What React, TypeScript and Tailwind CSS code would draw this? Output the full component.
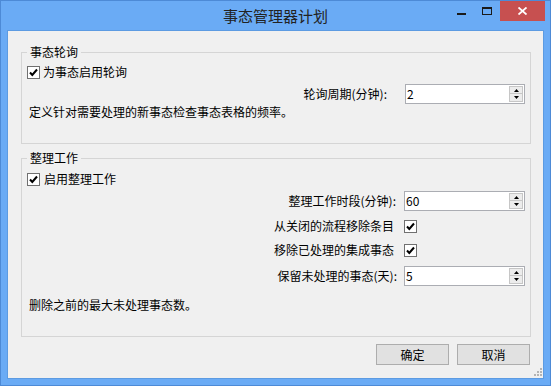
import React from 'react'

function CheckBox() {
  return (
    <span className="flex h-[13px] w-[13px] shrink-0 items-center justify-center border border-[#707070] bg-white">
      <svg width="11" height="11" viewBox="0 0 11 11">
        <path d="M2 5.5 L4.3 8 L9 2.5" fill="none" stroke="#000" strokeWidth="2" />
      </svg>
    </span>
  )
}

function SpinBox({ value, width }: { value: string; width: string }) {
  return (
    <div className={`flex h-[20px] ${width} shrink-0 items-stretch border border-[#abadb3] bg-white`}>
      <span className="flex-1 pl-[1px] text-[12px] leading-[18px]">{value}</span>
      <div className="my-[1px] mr-[1px] flex w-[14px] flex-col">
        <div className="flex h-[8px] items-center justify-center border border-[#c6c6c6] bg-[#ececec]">
          <svg width="5" height="3" viewBox="0 0 5 3">
            <path d="M0 3 L2.5 0 L5 3 Z" fill="#000" />
          </svg>
        </div>
        <div className="flex h-[8px] items-center justify-center border border-t-0 border-[#c6c6c6] bg-[#ececec]">
          <svg width="5" height="3" viewBox="0 0 5 3">
            <path d="M0 0 L2.5 3 L5 0 Z" fill="#000" />
          </svg>
        </div>
      </div>
    </div>
  )
}

function DialogButton({ label }: { label: string }) {
  return (
    <button className="flex h-[21px] w-[73px] items-center justify-center border border-[#adadad] bg-[#e1e1e1] text-[12px] leading-[16px] text-black">
      {label}
    </button>
  )
}

function FieldRow({ label, gap, children }: { label: string; gap: string; children: React.ReactNode }) {
  return (
    <div className="flex items-center justify-end">
      <span className={gap}>{label}</span>
      {children}
    </div>
  )
}

export default function App() {
  return (
    <div className="flex h-[386px] w-[551px] flex-col border border-[#4d8ad6] bg-[#6aabf5] font-['Noto_Sans_CJK_SC','Noto_Sans',sans-serif]">
      {/* title bar */}
      <div className="grid h-[29px] grid-cols-[1fr_auto_1fr]">
        <div />
        <div className="pt-[5px] text-[15px] leading-[20px] text-[#222]">事态管理器计划</div>
        <div className="flex items-start justify-end pr-[5px]">
          <div className="flex h-[20px] w-[26px] justify-center pt-[12px]">
            <span className="h-[2px] w-[9px] bg-[#1a1a1a]" />
          </div>
          <div className="flex h-[20px] w-[26px] justify-center pt-[6px]">
            <span className="h-[8px] w-[10px] border border-t-2 border-[#1a1a1a]" />
          </div>
          <div className="flex h-[20px] w-[45px] items-center justify-center bg-[#c75050]">
            <svg width="9" height="8" viewBox="0 0 9 8">
              <path d="M0.5 0.5 L8.5 7.5 M8.5 0.5 L0.5 7.5" stroke="#fff" strokeWidth="1.8" />
            </svg>
          </div>
        </div>
      </div>

      {/* client area */}
      <div className="mx-[6px] mb-[6px] flex flex-1 flex-col border border-[#5c9be2] bg-[#f0f0f0] text-[12px] leading-[16px] text-black">
        <fieldset className="ml-[13px] mr-[12px] mt-[13px] border border-[#d5d5d5] pb-[23px] pl-[5px] pr-[5px] pt-[4px]">
          <legend className="px-[3px]">事态轮询</legend>
          <div className="flex h-[16px] items-center gap-[3px]">
            <CheckBox />
            <span>为事态启用轮询</span>
          </div>
          <div className="mt-[4px]">
            <FieldRow label="轮询周期(分钟):" gap="mr-[18px]">
              <SpinBox value="2" width="w-[120px]" />
            </FieldRow>
          </div>
          <div className="h-[16px] pl-[2px]">定义针对需要处理的新事态检查事态表格的频率。</div>
        </fieldset>

        <fieldset className="ml-[13px] mr-[12px] mt-[6px] border border-[#d5d5d5] pb-[23px] pl-[5px] pr-[5px] pt-[5px]">
          <legend className="px-[3px]">整理工作</legend>
          <div className="flex h-[16px] items-center gap-[4px]">
            <CheckBox />
            <span>启用整理工作</span>
          </div>
          <div className="mt-[4px]">
            <FieldRow label="整理工作时段(分钟):" gap="mr-[8px]">
              <SpinBox value="60" width="w-[121px]" />
            </FieldRow>
          </div>
          <div className="mt-[7px] h-[16px]">
            <FieldRow label="从关闭的流程移除条目" gap="mr-[10px]">
              <div className="flex w-[121px]">
                <CheckBox />
              </div>
            </FieldRow>
          </div>
          <div className="mt-[8px] h-[16px]">
            <FieldRow label="移除已处理的集成事态" gap="mr-[10px]">
              <div className="flex w-[121px]">
                <CheckBox />
              </div>
            </FieldRow>
          </div>
          <div className="mt-[8px]">
            <FieldRow label="保留未处理的事态(天):" gap="mr-[7px]">
              <SpinBox value="5" width="w-[121px]" />
            </FieldRow>
          </div>
          <div className="mt-[11px] h-[16px] pl-[2px]">删除之前的最大未处理事态数。</div>
        </fieldset>

        <div className="mr-[13px] mt-[7px] flex justify-end gap-[8px]">
          <DialogButton label="确定" />
          <DialogButton label="取消" />
        </div>

        <div className="mr-[1px] mt-[3px] flex justify-end">
          <svg width="8" height="8" viewBox="0 0 8 8">
            <rect x="6" y="0" width="2" height="2" fill="#b4b4b4" />
            <rect x="3" y="3" width="2" height="2" fill="#b4b4b4" />
            <rect x="6" y="3" width="2" height="2" fill="#b4b4b4" />
            <rect x="0" y="6" width="2" height="2" fill="#b4b4b4" />
            <rect x="3" y="6" width="2" height="2" fill="#b4b4b4" />
            <rect x="6" y="6" width="2" height="2" fill="#b4b4b4" />
          </svg>
        </div>
      </div>
    </div>
  )
}
